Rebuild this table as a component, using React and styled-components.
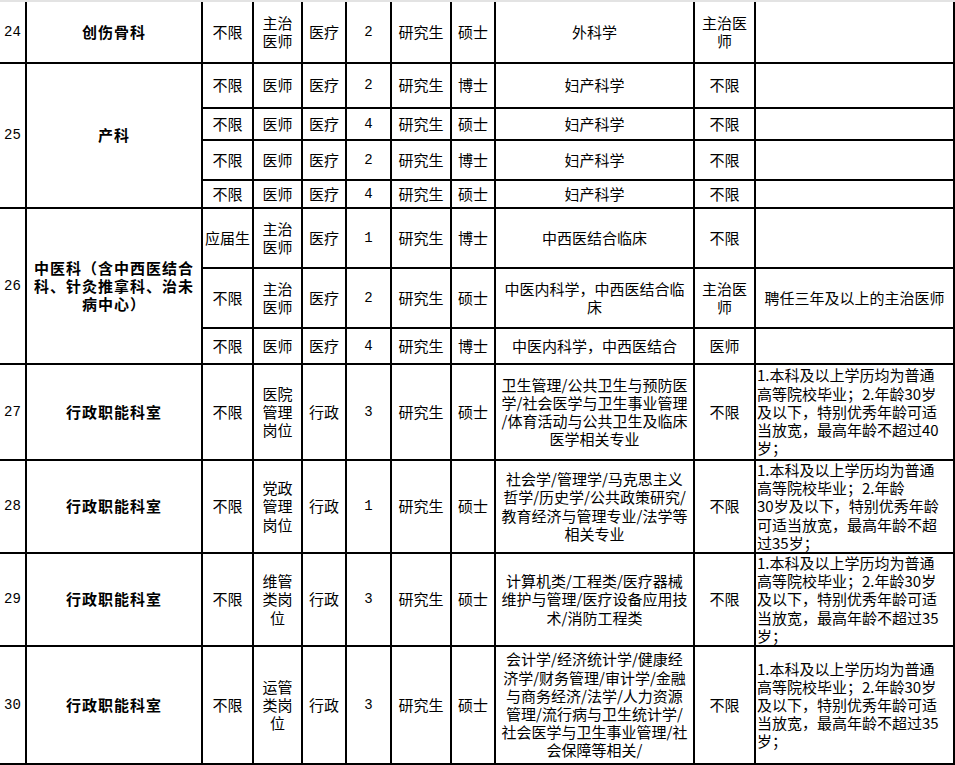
import React from "react";
import styled, { createGlobalStyle } from "styled-components";

const GlobalStyle = createGlobalStyle`
  html, body {
    margin: 0;
    padding: 0;
    background: #ffffff;
  }
  body {
    font-family: "Noto Sans CJK SC", "Noto Sans", sans-serif;
    color: #000;
  }
`;

const Sheet = styled.div`
  width: 955px;
  height: 765px;
  overflow: hidden;
  background: #fff;
  border-top: 2px solid #e3e3e3;
  box-sizing: border-box;
`;

const Table = styled.table`
  width: 954px;
  table-layout: fixed;
  border-collapse: collapse;
  font-family: "Noto Sans CJK SC", "Noto Sans", sans-serif;
  font-size: 15px;
  line-height: 18.2px;
  color: #000;
`;

const Row = styled.tr`
  height: ${(p) => p.$h}px;
`;

const Cell = styled.td`
  border: 2px solid #000;
  border-top: ${(p) => (p.$first ? "none" : "2px solid #000")};
  border-left: ${(p) => (p.$edge ? "none" : "2px solid #000")};
  padding: 0 1px;
  text-align: ${(p) => p.$align || "center"};
  vertical-align: middle;
  white-space: nowrap;
  overflow: visible;
  font-weight: ${(p) => (p.$bold ? 700 : 400)};
  letter-spacing: ${(p) => (p.$bold ? "1px" : "0")};
  font-family: ${(p) =>
    p.$mono
      ? '"Liberation Mono", "Noto Sans CJK SC", monospace'
      : '"Noto Sans CJK SC", "Noto Sans", sans-serif'};
  font-size: ${(p) => (p.$mono ? "14px" : "15px")};
`;

const widths = [26, 176, 51, 49, 44, 45, 60, 44, 199, 61, 199];

const remark40 = [
  "1.本科及以上学历均为普通",
  "高等院校毕业；2.年龄30岁",
  "及以下，特别优秀年龄可适",
  "当放宽，最高年龄不超过40",
  "岁；",
];
const remark35 = [
  "1.本科及以上学历均为普通",
  "高等院校毕业；2.年龄30岁",
  "及以下，特别优秀年龄可适",
  "当放宽，最高年龄不超过35",
  "岁；",
];
const remark28 = [
  "1.本科及以上学历均为普通",
  "高等院校毕业；2.年龄",
  "30岁及以下，特别优秀年龄",
  "可适当放宽，最高年龄不超",
  "过35岁；",
];

const groups = [
  {
    no: "24",
    dept: ["创伤骨科"],
    subs: [
      { h: 61, c: ["不限", ["主治", "医师"], "医疗", "2", "研究生", "硕士", "外科学", ["主治医", "师"], ""] },
    ],
  },
  {
    no: "25",
    dept: ["产科"],
    subs: [
      { h: 45, c: ["不限", "医师", "医疗", "2", "研究生", "博士", "妇产科学", "不限", ""] },
      { h: 32, c: ["不限", "医师", "医疗", "4", "研究生", "硕士", "妇产科学", "不限", ""] },
      { h: 40, c: ["不限", "医师", "医疗", "2", "研究生", "博士", "妇产科学", "不限", ""] },
      { h: 28, c: ["不限", "医师", "医疗", "4", "研究生", "硕士", "妇产科学", "不限", ""] },
    ],
  },
  {
    no: "26",
    dept: ["中医科（含中西医结合", "科、针灸推拿科、治未", "病中心）"],
    subs: [
      { h: 60, c: ["应届生", ["主治", "医师"], "医疗", "1", "研究生", "博士", "中西医结合临床", "不限", ""] },
      {
        h: 60,
        c: [
          "不限",
          ["主治", "医师"],
          "医疗",
          "2",
          "研究生",
          "硕士",
          ["中医内科学，中西医结合临", "床"],
          ["主治医", "师"],
          "聘任三年及以上的主治医师",
        ],
      },
      { h: 36, c: ["不限", "医师", "医疗", "4", "研究生", "博士", "中医内科学，中西医结合", "医师", ""] },
    ],
  },
  {
    no: "27",
    dept: ["行政职能科室"],
    subs: [
      {
        h: 96,
        left: true,
        c: [
          "不限",
          ["医院", "管理", "岗位"],
          "行政",
          "3",
          "研究生",
          "硕士",
          ["卫生管理/公共卫生与预防医", "学/社会医学与卫生事业管理", "/体育活动与公共卫生及临床", "医学相关专业"],
          "不限",
          remark40,
        ],
      },
    ],
  },
  {
    no: "28",
    dept: ["行政职能科室"],
    subs: [
      {
        h: 93,
        left: true,
        c: [
          "不限",
          ["党政", "管理", "岗位"],
          "行政",
          "1",
          "研究生",
          "硕士",
          ["社会学/管理学/马克思主义", "哲学/历史学/公共政策研究/", "教育经济与管理专业/法学等", "相关专业"],
          "不限",
          remark28,
        ],
      },
    ],
  },
  {
    no: "29",
    dept: ["行政职能科室"],
    subs: [
      {
        h: 93,
        left: true,
        c: [
          "不限",
          ["维管", "类岗", "位"],
          "行政",
          "3",
          "研究生",
          "硕士",
          ["计算机类/工程类/医疗器械", "维护与管理/医疗设备应用技", "术/消防工程类"],
          "不限",
          remark35,
        ],
      },
    ],
  },
  {
    no: "30",
    dept: ["行政职能科室"],
    subs: [
      {
        h: 118,
        left: true,
        c: [
          "不限",
          ["运管", "类岗", "位"],
          "行政",
          "3",
          "研究生",
          "硕士",
          [
            "会计学/经济统计学/健康经",
            "济学/财务管理/审计学/金融",
            "与商务经济/法学/人力资源",
            "管理/流行病与卫生统计学/",
            "社会医学与卫生事业管理/社",
            "会保障等相关/",
          ],
          "不限",
          remark35,
        ],
      },
    ],
  },
];

function Lines({ value }) {
  if (!Array.isArray(value)) return value;
  return value.map((line, i) => (
    <React.Fragment key={i}>
      {i > 0 && <br />}
      {line}
    </React.Fragment>
  ));
}

export default function App() {
  let rowIndex = 0;
  return (
    <>
      <GlobalStyle />
      <Sheet>
        <Table>
          <colgroup>
            {widths.map((w, i) => (
              <col key={i} style={{ width: w }} />
            ))}
          </colgroup>
          <tbody>
            {groups.map((g) =>
              g.subs.map((s, si) => {
                const first = rowIndex === 0;
                rowIndex += 1;
                return (
                  <Row key={g.no + "-" + si} $h={s.h}>
                    {si === 0 && (
                      <>
                        <Cell rowSpan={g.subs.length} $edge $first={first} $mono>
                          {g.no}
                        </Cell>
                        <Cell rowSpan={g.subs.length} $bold $first={first}>
                          <Lines value={g.dept} />
                        </Cell>
                      </>
                    )}
                    {s.c.map((v, ci) => (
                      <Cell
                        key={ci}
                        $first={first}
                        $mono={ci === 3}
                        $align={ci === 8 && s.left ? "left" : "center"}
                      >
                        <Lines value={v} />
                      </Cell>
                    ))}
                  </Row>
                );
              })
            )}
          </tbody>
        </Table>
      </Sheet>
    </>
  );
}
